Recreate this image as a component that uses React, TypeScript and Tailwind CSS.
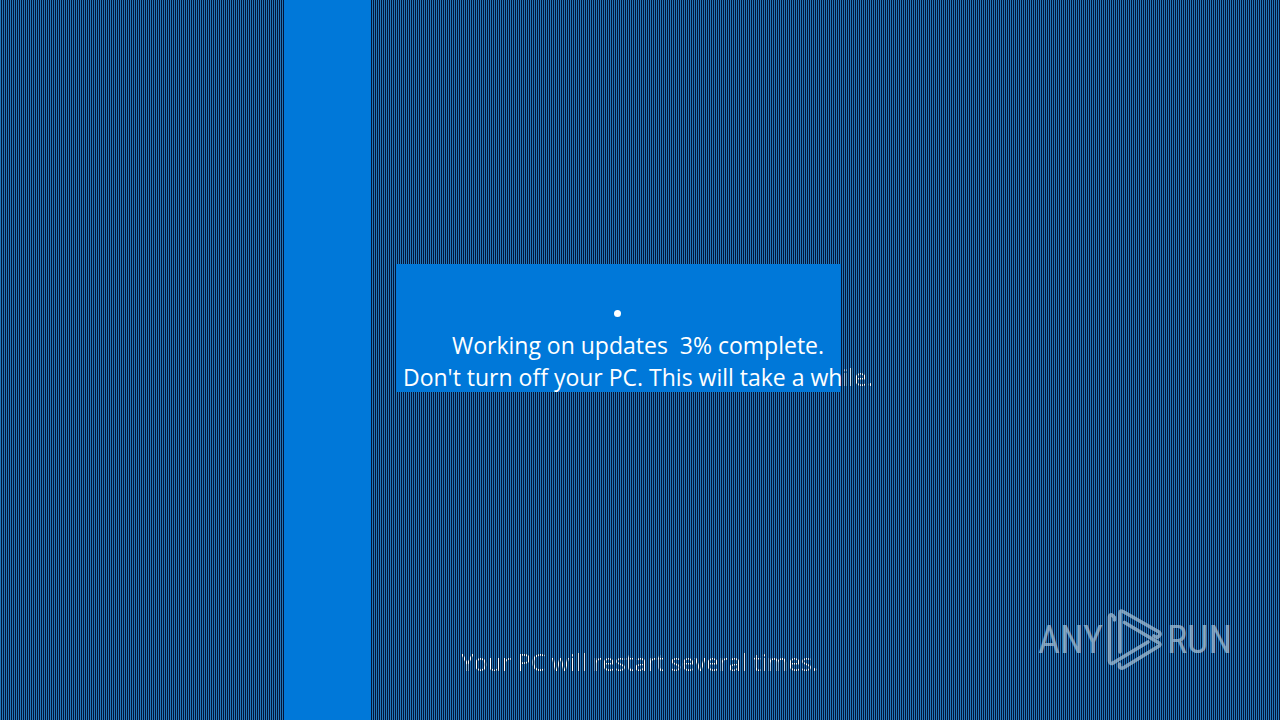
import React from 'react';

const Watermark = () => {
  return (
    <div className="flex items-center text-[#a3bed3]/75">
      <span className="font-['Roboto_Condensed','Liberation_Sans_Narrow','Roboto',sans-serif] text-[38px] leading-none font-normal">
        ANY
      </span>
      <svg
        className="mx-1 h-[62px] w-[56px]"
        viewBox="0 0 56 62"
        fill="none"
        stroke="currentColor"
        strokeWidth="3.6"
        strokeLinejoin="round"
        strokeLinecap="round"
        aria-hidden="true"
      >
        <path d="M13 43V4Q13 1 16 2.5L52 23Q54 25 52 27L50 28.5L47 27" />
        <path d="M17.5 13.5L52 34Q54 35.500 52 37L17 58.500Q14 60 12.500 58V55" />
        <path d="M41 33L6 54Q2.500 55.500 2.500 52V8Q2.500 5.500 5 6L7.500 8.500V11" />
      </svg>
      <span className="font-['Roboto_Condensed','Liberation_Sans_Narrow','Roboto',sans-serif] text-[38px] leading-none font-normal">
        RUN
      </span>
    </div>
  );
};

// Text that shows only through the lit columns of the background
const StripedText = ({ children }: { children: React.ReactNode }) => {
  return (
    <span className="bg-[repeating-linear-gradient(90deg,#f4fbff_0_1px,#061a33_1px_2px)] bg-fixed bg-clip-text text-transparent">
      {children}
    </span>
  );
};

const App = () => {
  return (
    <main className="flex min-h-screen overflow-hidden bg-[repeating-linear-gradient(90deg,#2377b8_0_1px,#03153a_1px_2px)] bg-fixed pl-[284px] font-['Open_Sans','Noto_Sans',sans-serif] text-[23px] leading-8 text-white">
      <div className="w-[87px] shrink-0 bg-[#0078d9]" />

      <section className="flex flex-1 flex-col justify-between pt-[264px] pb-[42px]">
        <div className="ml-[25px] h-32 w-[445px] bg-[#0078d9] pt-[46px]">
          <div className="flex w-[443px] justify-center">
            <span className="size-[7px] rounded-full bg-white" />
          </div>
          <div className="mt-3 w-[484px] text-center whitespace-pre">
            <p>Working on updates  3% complete.</p>
            <p>
              Don't turn off your PC. This will take a wh<StripedText>ile.</StripedText>
            </p>
          </div>
        </div>

        <footer className="flex items-center justify-between pr-12 pl-[90px]">
          <p className="pt-11">
            <StripedText>Your PC will restart several times.</StripedText>
          </p>
          <Watermark />
        </footer>
      </section>
    </main>
  );
};

export default App;
